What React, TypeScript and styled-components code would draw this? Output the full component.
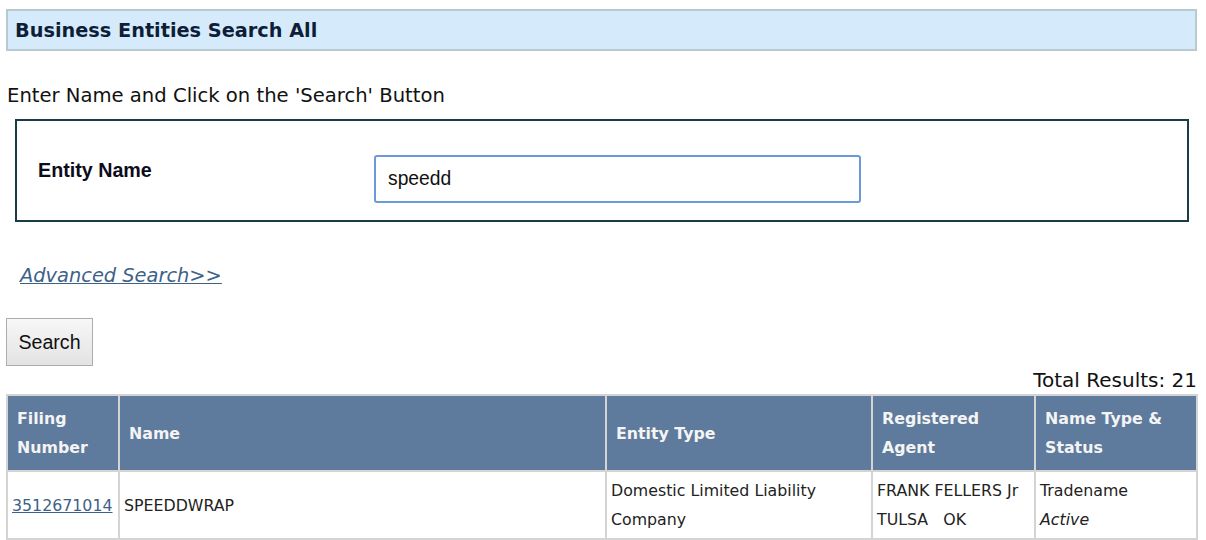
import React from "react";
import styled, { createGlobalStyle } from "styled-components";

const Global = createGlobalStyle`
  html, body { margin: 0; padding: 0; background: #fff; }
  body { font-family: "DejaVu Sans", Verdana, sans-serif; color: #111; }
`;

const Page = styled.div`
  padding: 9px 9px 0 6px;
`;

const TitleBar = styled.div`
  background: #d5ebfb;
  border: 2px solid #b7c9d1;
  height: 38px;
  display: flex;
  align-items: center;
  padding-left: 7px;
`;

const Title = styled.h1`
  margin: 0;
  font-size: 19.3px;
  font-weight: bold;
  color: #0f1e38;
`;

const Intro = styled.p`
  margin: 35px 0 0 1px;
  font-size: 19.6px;
  line-height: 20px;
`;

const SearchBox = styled.div`
  margin: 13px 8px 0 9px;
  border: 2px solid #183c48;
  display: grid;
  grid-template-columns: 357px 487px;
  padding: 34px 0 17px 0;
  font-family: "Liberation Sans", Arial, sans-serif;
`;

const Label = styled.label`
  font-weight: bold;
  font-size: 19.7px;
  padding: 4px 0 0 21px;
  color: #0c0c1a;
`;

const Input = styled.input`
  box-sizing: border-box;
  width: 487px;
  height: 48px;
  border: 2px solid #6a9ad8;
  border-radius: 3px;
  padding: 0 12px;
  font-family: "Liberation Sans", Arial, sans-serif;
  font-size: 19.3px;
  color: #111;
  outline: none;
`;

const AdvLink = styled.a`
  display: inline-block;
  margin: 42px 0 0 14px;
  font-style: italic;
  font-size: 19.4px;
  color: #3d6189;
  text-decoration: underline;
`;

const ButtonRow = styled.div`
  margin-top: 31px;
`;

const Button = styled.button`
  width: 87px;
  height: 48px;
  border: 1px solid #adadad;
  background: linear-gradient(#f7f7f7, #e3e3e3);
  font-family: "Liberation Sans", Arial, sans-serif;
  font-size: 19.6px;
  color: #111;
  padding: 0;
`;

const Total = styled.div`
  text-align: right;
  font-size: 20px;
  line-height: 22px;
  margin: 3px 0 3px;
`;

const Table = styled.table`
  width: 1190px;
  border-collapse: collapse;
  table-layout: fixed;
  font-size: 15.8px;
  line-height: 29px;
`;

const Th = styled.th`
  background: #5e7a9c;
  color: #f4f4f4;
  text-align: left;
  font-weight: bold;
  padding: 8px 9px;
  border: 2px solid #d4d4d4;
  vertical-align: middle;
`;

const Td = styled.td`
  padding: 4px 4px;
  border: 2px solid #d4d4d4;
  vertical-align: middle;
  color: #222;
`;

const NumLink = styled.a`
  color: #3d6189;
  text-decoration: underline;
`;

const Em = styled.i`
  display: block;
`;

export default function App() {
  return (
    <>
      <Global />
      <Page>
        <TitleBar>
          <Title>Business Entities Search All</Title>
        </TitleBar>
        <Intro>Enter Name and Click on the 'Search' Button</Intro>
        <SearchBox>
          <Label>Entity Name</Label>
          <Input defaultValue="speedd" />
        </SearchBox>
        <AdvLink href="#">Advanced Search&gt;&gt;</AdvLink>
        <ButtonRow>
          <Button>Search</Button>
        </ButtonRow>
        <Total>Total Results: 21</Total>
        <Table>
          <colgroup>
            <col style={{ width: 112 }} />
            <col style={{ width: 487 }} />
            <col style={{ width: 266 }} />
            <col style={{ width: 163 }} />
            <col style={{ width: 162 }} />
          </colgroup>
          <thead>
            <tr>
              <Th>Filing Number</Th>
              <Th>Name</Th>
              <Th>Entity Type</Th>
              <Th>Registered Agent</Th>
              <Th>Name Type &amp; Status</Th>
            </tr>
          </thead>
          <tbody>
            <tr>
              <Td><NumLink href="#">3512671014</NumLink></Td>
              <Td>SPEEDDWRAP</Td>
              <Td>Domestic Limited Liability Company</Td>
              <Td>FRANK FELLERS Jr<br />TULSA&nbsp;&nbsp;&nbsp;OK</Td>
              <Td>Tradename<Em>Active</Em></Td>
            </tr>
            <tr>
              <Td>&nbsp;</Td>
              <Td></Td>
              <Td></Td>
              <Td></Td>
              <Td></Td>
            </tr>
          </tbody>
        </Table>
      </Page>
    </>
  );
}
